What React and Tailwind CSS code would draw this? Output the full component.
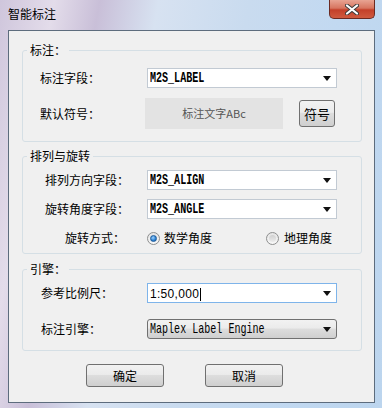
const cjk = "font-['Noto_Sans_CJK_SC','Noto_Sans',sans-serif]";

const Arrow = () => (
    <svg width="8" height="5" viewBox="0 0 8 5" className="shrink-0">
        <polygon points="0,0 8,0 4,5" fill="#111" />
    </svg>
);

const Combo = ({ children, focused, button }) => {
    let box =
        "w-[190px] h-[20px] flex items-center justify-between pl-[2px] pr-[5px] bg-white border";
    if (focused) box += " border-[#7eb4ea]";
    else if (button)
        box +=
            " border-[#707070] rounded-[3px] bg-[linear-gradient(#f2f2f2,#ebebeb_45%,#dddddd_50%,#cfcfcf)]";
    else box += " border-[#c2cad3]";
    return (
        <div className={box}>
            <div className="flex-1 overflow-hidden">{children}</div>
            <Arrow />
        </div>
    );
};

const MonoText = ({ children, bold }) => (
    <span
        className={`inline-block origin-left scale-x-[0.67] whitespace-nowrap font-['Liberation_Mono',monospace] text-[15px] leading-[18px] text-black ${
            bold ? "font-bold" : ""
        }`}
    >
        {children}
    </span>
);

const Radio = ({ checked }) => (
    <span className="w-[13px] h-[13px] rounded-full border border-[#8e8f8f] bg-[linear-gradient(#e4e4e4,#f8f8f8)] flex items-center justify-center shrink-0">
        {checked ? (
            <span className="w-[7px] h-[7px] rounded-full bg-[radial-gradient(circle_at_40%_35%,#9fd3ff,#2a7fd0_60%,#1b5fa8)] border border-[#1d5b9a]" />
        ) : (
            <span className="w-[7px] h-[7px] rounded-full bg-[linear-gradient(#d0d0d0,#ececec)]" />
        )}
    </span>
);

const Label = ({ children, pad }) => (
    <div className={`w-[124px] shrink-0 ${pad}`}>{children}</div>
);

const WinButton = ({ children, className }) => (
    <button
        className={`h-[23px] border border-[#707070] rounded-[3px] bg-[linear-gradient(#f2f2f2,#ebebeb_45%,#dddddd_50%,#cfcfcf)] text-[12px] text-black leading-none ${className}`}
    >
        {children}
    </button>
);

export default function App() {
    return (
        <div
            className={`w-[382px] h-[408px] overflow-hidden bg-[linear-gradient(100deg,#cfc6dc,#e3dcea_12%,#c9bfd8_22%,#d7e2f1_35%,#c9dbef_55%,#c2d9f1_75%,#bcd5ee)] ${cjk}`}
        >
            {/* Title bar */}
            <div className="flex h-[30px] items-start">
                <span className="ml-[8px] mt-[6px] text-[12px] leading-[16px] text-black">
                    智能标注
                </span>
                <button className="ml-auto mr-[7px] w-[46px] h-[19px] rounded-b-[5px] border border-t-0 border-[#6b2a22] bg-[linear-gradient(#e8a493,#d77560_45%,#c4402a_55%,#cf5a3f)] flex items-center justify-center">
                    <svg width="14" height="11" viewBox="0 0 14 11">
                        <path
                            d="M2 1.5 L12 9.5 M12 1.5 L2 9.5"
                            stroke="#3a3a3a"
                            strokeWidth="4"
                            strokeLinecap="round"
                        />
                        <path
                            d="M2 1.5 L12 9.5 M12 1.5 L2 9.5"
                            stroke="#ffffff"
                            strokeWidth="2.2"
                            strokeLinecap="round"
                        />
                    </svg>
                </button>
            </div>

            {/* Client area */}
            <div className="ml-[8px] w-[367px] h-[373px] border border-[#5d6c7d] bg-[#f0f0f0] text-[12px] text-black">
                {/* 标注 */}
                <fieldset className="ml-[13px] mt-[12px] w-[340px] border border-[#d5dfe5] rounded-[3px] pt-[11px] pb-[12px]">
                    <legend className="ml-[4px] px-[3px] leading-[14px]">标注：</legend>
                    <div className="flex items-center h-[20px]">
                        <Label pad="pl-[17px]">标注字段：</Label>
                        <Combo>
                            <MonoText bold>M2S_LABEL</MonoText>
                        </Combo>
                    </div>
                    <div className="flex items-center mt-[10px]">
                        <Label pad="pl-[17px]">默认符号：</Label>
                        <div className="-ml-[2px] w-[138px] h-[31px] bg-[#e3e3e3] flex items-center justify-center text-[11px] text-[#555]">
                            标注文字ABc
                        </div>
                        <WinButton className="ml-[16px] w-[36px] h-[27px] text-[13px]">
                            符号
                        </WinButton>
                    </div>
                </fieldset>

                {/* 排列与旋转 */}
                <fieldset className="ml-[13px] mt-[7px] w-[340px] border border-[#d5dfe5] rounded-[3px] pt-[7px] pb-[5px]">
                    <legend className="ml-[4px] px-[3px] leading-[14px]">排列与旋转</legend>
                    <div className="flex items-center h-[20px]">
                        <Label pad="pl-[22px]">排列方向字段：</Label>
                        <Combo>
                            <MonoText bold>M2S_ALIGN</MonoText>
                        </Combo>
                    </div>
                    <div className="flex items-center h-[20px] mt-[9px]">
                        <Label pad="pl-[22px]">旋转角度字段：</Label>
                        <Combo>
                            <MonoText bold>M2S_ANGLE</MonoText>
                        </Combo>
                    </div>
                    <div className="flex items-center h-[20px] mt-[9px]">
                        <Label pad="pl-[42px]">旋转方式：</Label>
                        <div className="w-[119px] flex items-center gap-[4px]">
                            <Radio checked />
                            <span>数学角度</span>
                        </div>
                        <div className="flex items-center gap-[5px]">
                            <Radio />
                            <span>地理角度</span>
                        </div>
                    </div>
                </fieldset>

                {/* 引擎 */}
                <fieldset className="ml-[13px] mt-[8px] w-[340px] border border-[#d5dfe5] rounded-[3px] pt-[7px] pb-[11px]">
                    <legend className="ml-[4px] px-[3px] leading-[14px]">引擎：</legend>
                    <div className="flex items-center h-[20px]">
                        <Label pad="pl-[18px]">参考比例尺：</Label>
                        <Combo focused>
                            <span className="font-['Liberation_Sans',sans-serif] text-[12px] leading-[18px] tracking-[0.3px]">
                                1:50,000
                            </span>
                            <span className="inline-block w-px h-[13px] bg-black align-middle ml-[1px]" />
                        </Combo>
                    </div>
                    <div className="flex items-center h-[20px] mt-[16px]">
                        <Label pad="pl-[18px]">标注引擎：</Label>
                        <Combo button>
                            <MonoText>Maplex Label Engine</MonoText>
                        </Combo>
                    </div>
                </fieldset>

                {/* Buttons */}
                <div className="flex mt-[13px] ml-[77px] gap-[41px]">
                    <WinButton className="w-[78px]">确定</WinButton>
                    <WinButton className="w-[78px]">取消</WinButton>
                </div>
            </div>
        </div>
    );
}
